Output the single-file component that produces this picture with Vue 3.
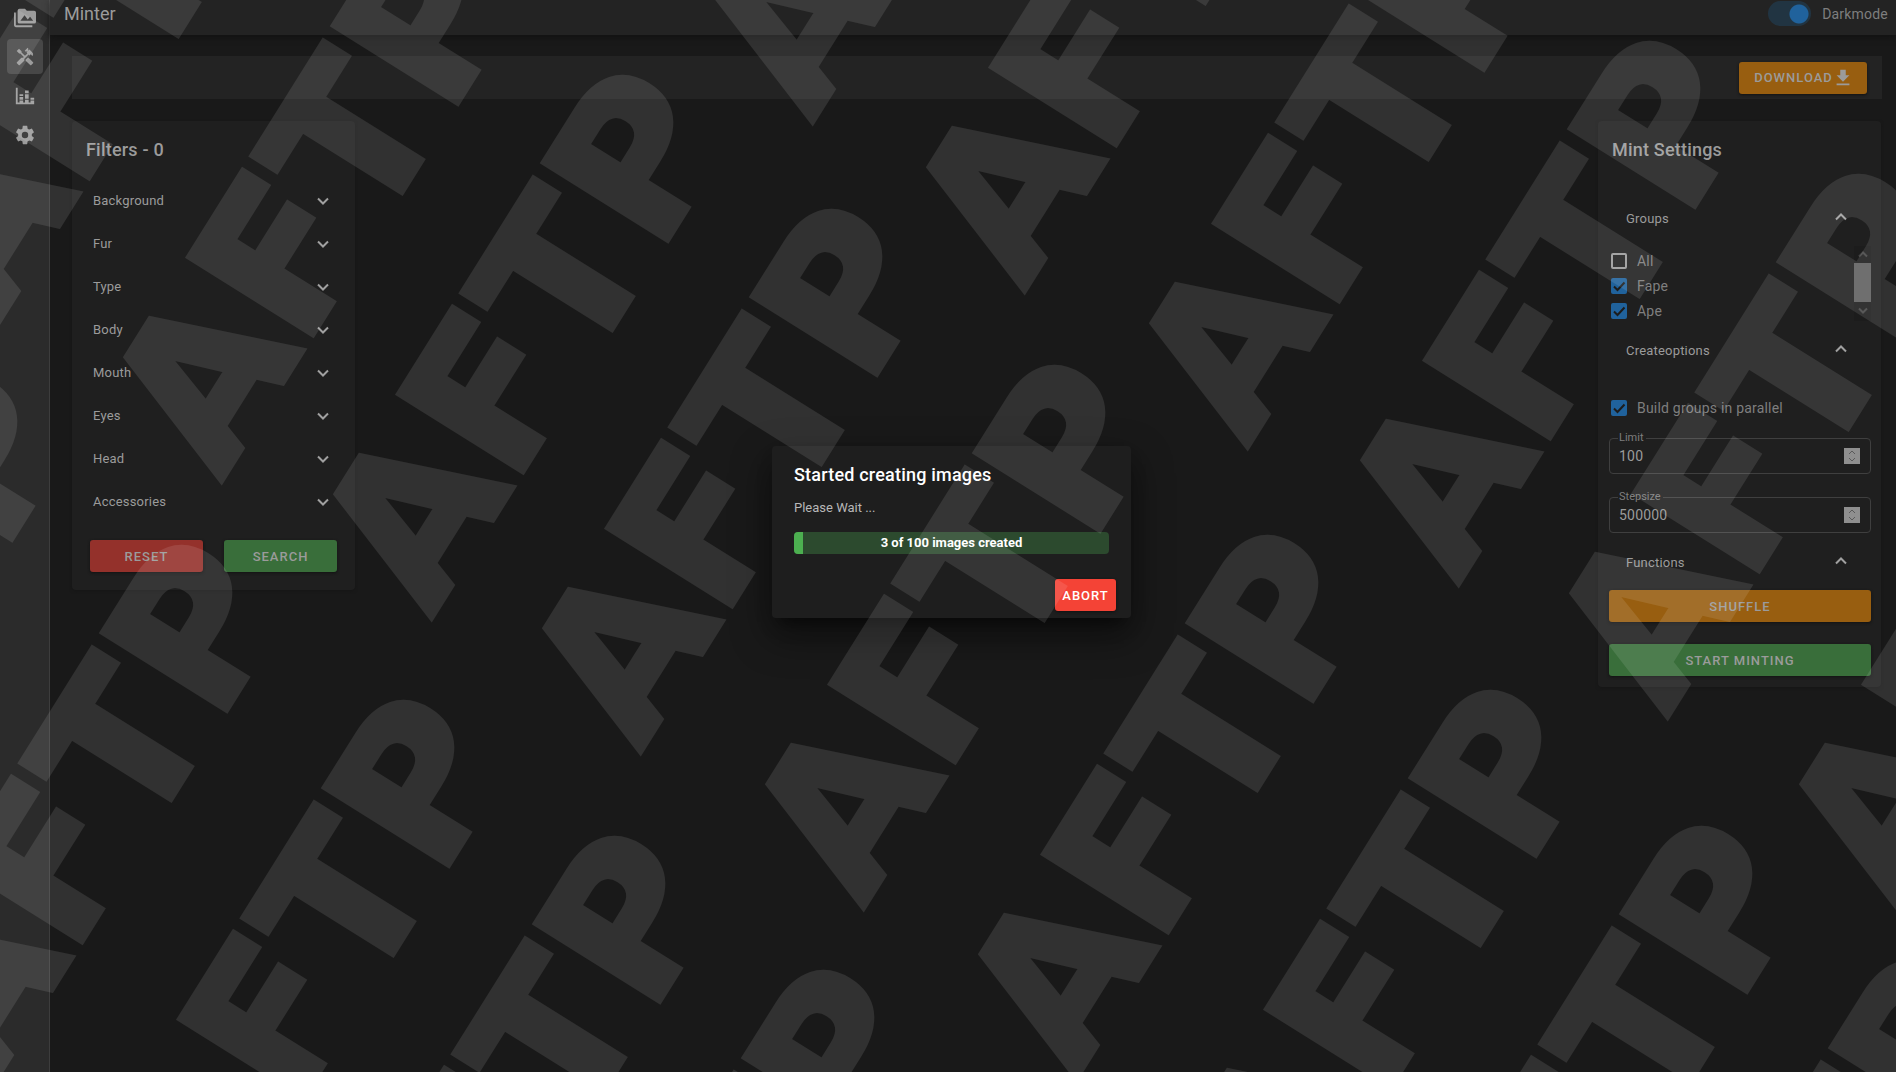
<script setup>
import { ref } from 'vue'

const filters = ['Background', 'Fur', 'Type', 'Body', 'Mouth', 'Eyes', 'Head', 'Accessories']
const nav = [
  { label: 'Collections', path: 'M7,15L11.5,9L15,13.5L17.5,10.5L21,15M22,4H14L12,2H6A2,2 0 0,0 4,4V16A2,2 0 0,0 6,18H22A2,2 0 0,0 24,16V6A2,2 0 0,0 22,4M2,6H0V20A2,2 0 0,0 2,22H20V20H2V6Z' },
  { label: 'Minter', active: true, path: 'M21.67 18.17l-5.3-5.3h-.99l-2.54 2.54v.99l5.3 5.3c.39.39 1.02.39 1.41 0l2.12-2.12c.39-.38.39-1.02 0-1.41z M17.34 10.19l1.41-1.41 2.12 2.12c1.17-1.17 1.17-3.07 0-4.24l-3.54-3.54-1.41 1.41V1.71l-.7-.71-3.54 3.54.71.71h2.83l-1.41 1.41 1.06 1.06-2.89 2.89-4.13-4.13V5.06L4.83 2.04 2 4.87 5.03 7.9h1.41l4.13 4.13-.85.85H7.6l-5.3 5.3c-.39.39-.39 1.02 0 1.41l2.12 2.12c.39.39 1.02.39 1.41 0l5.3-5.3v-2.12l5.15-5.15 1.06 1.05z' },
  { label: 'Statistics', path: 'M22,21H2V3H4V19H6V17H10V19H12V16H16V19H18V17H22V21M18,14H22V16H18V14M12,6H16V9H12V6M16,15H12V10H16V15M6,10H10V12H6V10M10,16H6V13H10V16Z' },
  { label: 'Settings', path: 'M12,15.5A3.5,3.5 0 0,1 8.5,12A3.5,3.5 0 0,1 12,8.5A3.5,3.5 0 0,1 15.5,12A3.5,3.5 0 0,1 12,15.5M19.43,12.97C19.47,12.65 19.5,12.33 19.5,12C19.5,11.67 19.47,11.34 19.43,11L21.54,9.37C21.73,9.22 21.78,8.95 21.66,8.73L19.66,5.27C19.54,5.05 19.27,4.96 19.05,5.05L16.56,6.05C16.04,5.66 15.5,5.32 14.87,5.07L14.5,2.42C14.46,2.18 14.25,2 14,2H10C9.75,2 9.54,2.18 9.5,2.42L9.13,5.07C8.5,5.32 7.96,5.66 7.44,6.05L4.95,5.05C4.73,4.96 4.46,5.05 4.34,5.27L2.34,8.73C2.21,8.95 2.27,9.22 2.46,9.37L4.57,11C4.53,11.34 4.5,11.67 4.5,12C4.5,12.33 4.53,12.65 4.57,12.97L2.46,14.63C2.27,14.78 2.21,15.05 2.34,15.27L4.34,18.73C4.46,18.95 4.73,19.03 4.95,18.95L7.44,17.94C7.96,18.34 8.5,18.68 9.13,18.93L9.5,21.58C9.54,21.82 9.75,22 10,22H14C14.25,22 14.46,21.82 14.5,21.58L14.87,18.93C15.5,18.67 16.04,18.34 16.56,17.94L19.05,18.95C19.27,19.03 19.54,18.95 19.66,18.73L21.66,15.27C21.78,15.05 21.73,14.78 21.54,14.63L19.43,12.97Z' }
]
const groups = ref([
  { name: 'All', checked: false },
  { name: 'Fape', checked: true },
  { name: 'Ape', checked: true }
])
const darkmode = ref(true)
const parallel = ref(true)
const limit = ref(100)
const stepsize = ref(500000)
const created = ref(3)

// baseline start of every watermark word
const marks = [
  [-225, 917], [-10, 1088], [212, 1243], [423, 1379], [632, 1513],
  [-3, 324], [221, 481], [431, 618], [640, 752], [863, 908],
  [1076, 1078], [1299, 1233], [1510, 1369], [1719, 1503],
  [812, 122], [1024, 291], [1247, 447], [1458, 584], [1667, 717], [1897, 908]
]
</script>

<template>
  <div class="app">
    <nav class="rail">
      <a v-for="n in nav" :key="n.label" href="#" :aria-label="n.label" :class="{ active: n.active }">
        <svg viewBox="0 0 24 24"><path :d="n.path" /></svg>
      </a>
    </nav>

    <div class="page">
      <header class="topbar">
        <h1>Minter</h1>
        <label class="switch"><input v-model="darkmode" type="checkbox" role="switch"><span>Darkmode</span></label>
      </header>

      <main>
        <div class="toolbar">
          <button class="btn orange download">DOWNLOAD
            <svg viewBox="0 0 24 24"><path d="M9,3V9H5L12,16L19,9H15V3H9M5,18V20H19V18H5Z" /></svg>
          </button>
        </div>

        <div class="columns">
          <section class="card filters">
            <h2>Filters - 0</h2>
            <button v-for="f in filters" :key="f" class="row">
              <span>{{ f }}</span>
              <svg viewBox="0 0 12 12"><path d="M1 3.5L6 8.5L11 3.5" /></svg>
            </button>
            <div class="actions">
              <button class="btn red">RESET</button>
              <button class="btn green">SEARCH</button>
            </div>
          </section>

          <section class="card settings">
            <h2>Mint Settings</h2>
            <button class="head"><span>Groups</span><svg viewBox="0 0 12 12"><path d="M1 8.5L6 3.5L11 8.5" /></svg></button>
            <div class="scroller">
              <div class="list">
                <label v-for="g in groups" :key="g.name" class="check">
                  <input v-model="g.checked" type="checkbox">
                  <svg viewBox="0 0 16 16"><path d="M3 8.5L6.5 12L13.5 4.5" /></svg>
                  <span>{{ g.name }}</span>
                </label>
              </div>
              <div class="scrollbar">
                <svg viewBox="0 0 12 12"><path d="M2 8L6 4L10 8" /></svg>
                <div class="thumb"></div>
                <svg viewBox="0 0 12 12"><path d="M2 4L6 8L10 4" /></svg>
              </div>
            </div>
            <button class="head"><span>Createoptions</span><svg viewBox="0 0 12 12"><path d="M1 8.5L6 3.5L11 8.5" /></svg></button>
            <label class="check parallel">
              <input v-model="parallel" type="checkbox">
              <svg viewBox="0 0 16 16"><path d="M3 8.5L6.5 12L13.5 4.5" /></svg>
              <span>Build groups in parallel</span>
            </label>
            <fieldset class="field">
              <legend><label for="limit">Limit</label></legend>
              <input id="limit" v-model="limit" type="number">
              <svg viewBox="0 0 16 16"><path d="M5 6L8 3L11 6M5 10L8 13L11 10" /></svg>
            </fieldset>
            <fieldset class="field">
              <legend><label for="stepsize">Stepsize</label></legend>
              <input id="stepsize" v-model="stepsize" type="number">
              <svg viewBox="0 0 16 16"><path d="M5 6L8 3L11 6M5 10L8 13L11 10" /></svg>
            </fieldset>
            <button class="head last"><span>Functions</span><svg viewBox="0 0 12 12"><path d="M1 8.5L6 3.5L11 8.5" /></svg></button>
            <button class="btn orange">SHUFFLE</button>
            <button class="btn green start">START MINTING</button>
          </section>
        </div>
      </main>
    </div>

    <div class="overlay">
      <div class="dialog" role="dialog" aria-labelledby="dialog-title">
        <h2 id="dialog-title">Started creating images</h2>
        <p>Please Wait ...</p>
        <div class="progress" role="progressbar" :aria-valuenow="created" aria-valuemax="100">
          <div class="fill" :style="{ width: created + '%' }"></div>
          <strong>{{ created }} of 100 images created</strong>
        </div>
        <button class="btn abort">ABORT</button>
      </div>
    </div>

    <svg class="watermark" aria-hidden="true">
      <text v-for="(m, i) in marks" :key="i" :transform="`translate(${m[0]} ${m[1]}) rotate(-58)`">AFTP</text>
    </svg>
  </div>
</template>

<style>
body { background: #191919; }
</style>

<style scoped>
* { box-sizing: border-box; }
.app {
  display: flex;
  min-height: 100vh;
  overflow: hidden;
  position: relative;
  background: #191919;
  color: #9b9b9b;
  font-family: Roboto, "Liberation Sans", sans-serif;
  font-size: 13px;
}
h1, h2, p { margin: 0; }
button, input { font: inherit; color: inherit; }
button { border: 0; padding: 0; background: none; }
.rail {
  width: 50px;
  flex: none;
  display: flex;
  flex-direction: column;
  align-items: center;
  gap: 4px;
  background: #2b2b2b;
  border-right: 1px solid #3d3d3d;
}
.rail a {
  width: 36px;
  height: 35px;
  display: grid;
  place-items: center;
  border-radius: 4px;
}
.rail a.active { background: #474747; }
.rail svg { width: 22px; height: 22px; fill: #9b9b9b; }
.rail a.active svg { width: 20px; height: 20px; }
.page { flex: 1; min-width: 0; }
.topbar {
  height: 35px;
  padding: 0 8px 8px 14px;
  display: flex;
  align-items: center;
  justify-content: space-between;
  background: #232323;
  box-shadow: 0 2px 6px #111;
}
.topbar h1 { font-size: 18px; font-weight: 400; }
.switch { display: flex; align-items: center; gap: 11px; font-size: 14px; color: #7e7e7e; letter-spacing: 0.2px; }
.switch input {
  appearance: none;
  width: 43px;
  height: 25px;
  margin: 0;
  border-radius: 13px;
  background: radial-gradient(circle at 31px 13px, #20629c 9px, #213442 10px);
}
main { padding: 21px 14px 24px 22px; }
.toolbar {
  height: 43px;
  padding-right: 15px;
  display: flex;
  align-items: center;
  justify-content: flex-end;
  background: #232323;
}
.btn {
  height: 32px;
  border-radius: 3px;
  font-weight: 500;
  letter-spacing: 1px;
  box-shadow: 0 1px 3px #111;
}
.orange { background: #985e10; }
.red { background: #94312b; }
.green { background: #396e3a; }
.download { width: 128px; padding-left: 2px; display: flex; align-items: center; justify-content: center; }
.download svg { width: 22px; height: 22px; margin-left: -1px; fill: #9b9b9b; }
.columns { display: flex; justify-content: space-between; align-items: flex-start; margin: 22px 1px 0 0; }
.card { width: 283px; background: #1f1f1f; border-radius: 4px; box-shadow: 0 1px 3px #161616; }
.card h2 { font-size: 18px; line-height: 24px; font-weight: 500; letter-spacing: 0.2px; padding: 17px 14px 0; }
.row, .head { width: 100%; display: flex; justify-content: space-between; align-items: center; font-weight: 400; letter-spacing: 0.2px; }
.row svg, .head svg { width: 12px; height: 12px; fill: none; stroke: #a0a0a0; stroke-width: 2; }
.head svg { margin-bottom: 3px; }
.filters { padding-bottom: 18px; }
.row { height: 43px; padding: 0 26px 0 21px; }
.filters h2 { margin-bottom: 17px; }
.actions { display: flex; gap: 21px; padding: 17px 18px 0; }
.actions .btn { flex: 1; }
.settings { padding: 0 10px 11px 11px; display: flex; flex-direction: column; }
.settings h2 { padding: 17px 3px 0; margin-bottom: 35px; }
.head { height: 42px; padding: 0 24px 0 17px; }
.head.last { margin: 8px 0 7px; }
.scroller { display: flex; justify-content: space-between; height: 75px; margin: 7px 0 8px; }
.list { padding-top: 2px; }
.check { height: 25px; display: flex; align-items: center; gap: 10px; padding-left: 2px; font-size: 14px; color: #7e7e7e; letter-spacing: 0.2px; }
.check input { appearance: none; width: 16px; height: 16px; margin: 0; border: 2px solid #9b9b9b; border-radius: 2px; }
.check input:checked { border: 0; background: #20629c; }
.check svg { width: 16px; height: 16px; margin-left: -26px; fill: none; }
.check input:checked + svg { stroke: #1c1c1c; stroke-width: 2; }
.scrollbar { width: 17px; display: flex; flex-direction: column; align-items: center; background: #1c1c1c; }
.scrollbar svg { width: 12px; height: 17px; fill: none; stroke: #454545; stroke-width: 2; }
.thumb { width: 17px; height: 39px; background: #5f5f5f; }
.parallel { margin: 24px 0 12px; }
.field {
  height: 42px;
  margin: 0;
  padding: 4px 10px 0 9px;
  min-width: 0;
  display: flex;
  align-items: center;
  border: 1px solid #3f3f3f;
  border-radius: 4px;
}
.field + .field { margin-top: 17px; }
.field legend { padding: 0 2px 0 1px; margin-left: -1px; font-size: 11px; line-height: 12px; color: #7e7e7e; }
.field input { flex: 1; min-width: 0; border: 0; padding: 0; background: none; font-size: 14px; letter-spacing: 0.2px; appearance: textfield; outline: 0; }
.field svg { width: 16px; height: 16px; background: #8f8f8f; fill: none; stroke: #5a5a5a; }
.start { margin-top: 22px; }
.overlay {
  position: absolute;
  inset: 0;
  display: grid;
  place-items: center;
  padding: 0 0 8px 7px;
}
.dialog {
  width: 359px;
  padding: 17px 22px 7px;
  display: flex;
  flex-direction: column;
  background: #1e1e1e;
  border-radius: 4px;
  box-shadow: 0 11px 15px -7px #0008, 0 16px 38px 3px #0006;
}
.dialog h2 { font-size: 18px; line-height: 24px; font-weight: 500; letter-spacing: 0.2px; color: #fff; }
.dialog p { margin-top: 12px; line-height: 18px; color: #b8b8b8; }
.progress { height: 22px; margin: 15px 0 25px; display: grid; background: #2c4a2e; border-radius: 4px; overflow: hidden; }
.progress > * { grid-area: 1 / 1; }
.progress strong { place-self: center; line-height: 21px; padding-bottom: 1px; color: #fff; }
.fill { background: #4caf50; }
.abort { width: 61px; margin-right: -7px; align-self: flex-end; background: #f44336; color: #fff; }
.watermark {
  position: absolute;
  inset: 0;
  width: 100%;
  height: 100%;
  pointer-events: none;
  opacity: 0.1;
  fill: #fff;
  stroke: #fff;
  stroke-width: 6px;
  font-family: "DejaVu Sans", sans-serif;
  font-weight: 700;
  font-size: 200px;
}
</style>
